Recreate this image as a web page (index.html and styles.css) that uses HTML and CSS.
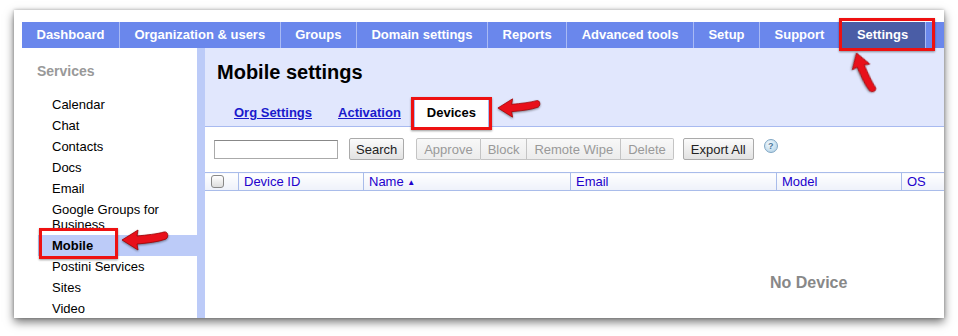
FILE: index.html
```html
<html><head>
    <title>Mobile settings</title>
    <link rel="stylesheet" href="styles.css">
</head>
<body>
<div class="window">
    <div class="topnav">
        <div class="nav-item">Dashboard</div>
        <div class="nav-item">Organization &amp; users</div>
        <div class="nav-item">Groups</div>
        <div class="nav-item">Domain settings</div>
        <div class="nav-item">Reports</div>
        <div class="nav-item">Advanced tools</div>
        <div class="nav-item">Setup</div>
        <div class="nav-item">Support</div>
        <div class="nav-item selected">Settings</div>
    </div>
    <div class="main">
        <div class="sidebar">
            <div class="side-title">Services</div>
            <div class="side-item">Calendar</div>
            <div class="side-item">Chat</div>
            <div class="side-item">Contacts</div>
            <div class="side-item">Docs</div>
            <div class="side-item">Email</div>
            <div class="side-item">Google Groups for Business</div>
            <div class="side-item current">Mobile</div>
            <div class="side-item">Postini Services</div>
            <div class="side-item">Sites</div>
            <div class="side-item">Video</div>
        </div>
        <div class="strip"></div>
        <div class="content">
            <div class="header">
                <h1 class="title">Mobile settings</h1>
                <div class="tabs">
                    <a class="tab">Org Settings</a>
                    <a class="tab">Activation</a>
                    <span class="tab active">Devices</span>
                </div>
            </div>
            <div class="toolbar">
                <input class="search-box" type="text">
                <button class="btn search-btn">Search</button>
                <div class="btn-group">
                    <button class="btn disabled">Approve</button>
                    <button class="btn disabled">Block</button>
                    <button class="btn disabled">Remote Wipe</button>
                    <button class="btn disabled">Delete</button>
                </div>
                <button class="btn export-btn">Export All</button>
                <span class="help">?</span>
            </div>
            <table class="devices">
                <thead><tr>
                    <th class="col-check"><span class="checkbox"></span></th>
                    <th class="col-id">Device ID</th>
                    <th class="col-name">Name <span class="sort">&#9650;</span></th>
                    <th class="col-email">Email</th>
                    <th class="col-model">Model</th>
                    <th class="col-os">OS</th>
                </tr></thead>
            </table>
            <div class="empty">No Device</div>
        </div>
    </div>

    <!-- callouts drawn over the screenshot -->
    <div class="callout box-settings"></div>
    <div class="callout box-devices"></div>
    <div class="callout box-mobile"></div>

    <svg class="arrow arrow-settings" width="44" height="22" viewBox="0 0 48 22">
        <path d="M1,11 L17,1 L16,7 C26,6 36,5 43,3 C47,2 48,8 45,10 C37,13 27,14 16,15 L17,21 Z"/>
    </svg>
    <svg class="arrow arrow-devices" width="44" height="22" viewBox="0 0 48 22">
        <path d="M1,11 L17,1 L16,7 C26,6 36,5 43,3 C47,2 48,8 45,10 C37,13 27,14 16,15 L17,21 Z"/>
    </svg>
    <svg class="arrow arrow-mobile" width="48" height="22" viewBox="0 0 48 22">
        <path d="M1,11 L17,1 L16,7 C26,6 36,5 43,3 C47,2 48,8 45,10 C37,13 27,14 16,15 L17,21 Z"/>
    </svg>
</div>
</body></html>
```

FILE: styles.css
```css
body {margin: 0; background: #fff; font-family: "Liberation Sans", Arial, sans-serif; font-size: 13px; color: #000;}

.window {position: relative; margin: 10px 0 0 14px; width: 930px; height: 308px; box-sizing: border-box;
         padding: 12px 0 0 8px; background: #fff; overflow: hidden;
         box-shadow: 0 4px 9px rgba(0,0,0,0.55), 0 0 3px rgba(0,0,0,0.25);}

/* top navigation */
.topnav {display: flex; height: 26px; background: #6a87ec;}
.nav-item {padding: 0 14.5px; line-height: 26px; color: #fff; font-weight: bold; border-right: 1px solid #a9baf4; white-space: nowrap;}
.nav-item.selected {background: #4a5da6; padding: 0 17px;}

.main {display: flex; height: 270px;}

/* left column */
.sidebar {width: 175px; padding-top: 13px;}
.side-title {padding-left: 15px; font-size: 14px; font-weight: bold; color: #999; line-height: 20px; margin-bottom: 13px;}
.side-item {margin-left: 16px; padding: 3px 10px 3px 14px; line-height: 15px;}
.side-item.current {background: #bccbf8; font-weight: bold;}
.strip {width: 8px; background: #bccbf8;}

/* content */
.content {flex: 1; overflow: hidden;}
.header {background: #e1e7fd; height: 78px; border-bottom: 1px solid #a8baf0; box-sizing: content-box;}
.title {margin: 0; padding: 12px 0 0 12px; font-size: 20px; line-height: 24px; font-weight: bold;}
.tabs {display: flex; margin: 14px 0 0 16px;}
.tab {border: 1px solid transparent; border-bottom: none; padding: 0 12px; height: 28px; line-height: 28px;
      font-weight: bold; color: #1a1acc; text-decoration: underline;}
.tab.active {background: #fff; color: #000; text-decoration: none; border-color: #a8baf0; height: 29px;}

.toolbar {display: flex; align-items: center; height: 22px; margin: 11px 0 0 9px;}
.search-box {width: 124px; height: 19px; box-sizing: border-box; border: 1px solid #aaa; border-top-color: #888; margin: 0;}
.btn {height: 22px; padding: 0 7px; font: 13px "Liberation Sans", Arial, sans-serif; color: #222;
      background: linear-gradient(#fbfbfb, #e2e2e2); border: 1px solid #aaa; border-radius: 2px; margin: 0;}
.search-btn {margin-left: 11px; padding: 0 6px;}
.btn-group {display: flex; margin-left: 12px;}
.btn-group .btn {border-radius: 0; border-left-width: 0;}
.btn-group .btn:first-child {border-left-width: 1px; border-radius: 2px 0 0 2px;}
.btn-group .btn:last-child {border-radius: 0 2px 2px 0;}
.btn.disabled {color: #999; background: linear-gradient(#f8f8f8, #ececec); border-color: #c4c4c4;}
.export-btn {margin-left: 9px;}
.help {display: inline-block; width: 12px; height: 12px; margin: -7px 0 0 10px; border-radius: 50%;
       background: radial-gradient(circle at 40% 35%, #f4fbff, #a9cbe2); border: 1px solid #7fa6c4;
       font-size: 9px; line-height: 12px; text-align: center; color: #4e7899; font-weight: bold;}

.devices {width: 800px; table-layout: fixed; border-collapse: collapse; margin-top: 12px; font-size: 13px;}
.devices th {height: 18px; padding: 0 0 0 5px; text-align: left; font-weight: normal; color: #2200cc; font-size: 13px;
             background: linear-gradient(#ffffff, #eef1fa); border: 1px solid #a9bcea; border-left: none; white-space: nowrap;}
.devices th.col-check {border-left: none;}
.col-check {width: 28px;}
.col-id {width: 119px;}
.col-name {width: 201px;}
.col-email {width: 200px;}
.col-model {width: 119px;}
.checkbox {display: inline-block; width: 11px; height: 11px; border: 1px solid #888; border-radius: 3px;
           background: linear-gradient(#fff, #ddd); vertical-align: middle; margin-left: 1px;}
.sort {font-size: 8px; vertical-align: 1px; color: #2200cc;}

.empty {margin: 83px 0 0 565px; font-size: 16px; font-weight: bold; color: #888;}

/* red callouts */
.callout {position: absolute; border: 3px solid #ee1111; box-sizing: border-box; box-shadow: 0 1px 2px rgba(0,0,0,0.4);}
.box-settings {left: 825px; top: 8px; width: 96px; height: 33px;}
.box-devices {left: 397px; top: 87px; width: 81px; height: 33px;}
.box-mobile {left: 25px; top: 218px; width: 79px; height: 31px;}

.arrow {position: absolute; fill: #e8101a; stroke: #a00000; stroke-width: 0.8; filter: drop-shadow(0 1px 1px rgba(0,0,0,0.45));}
.arrow-settings {left: 827px; top: 52px; transform: rotate(72deg);}
.arrow-devices {left: 483px; top: 87px;}
.arrow-mobile {left: 107px; top: 219px;}
```
